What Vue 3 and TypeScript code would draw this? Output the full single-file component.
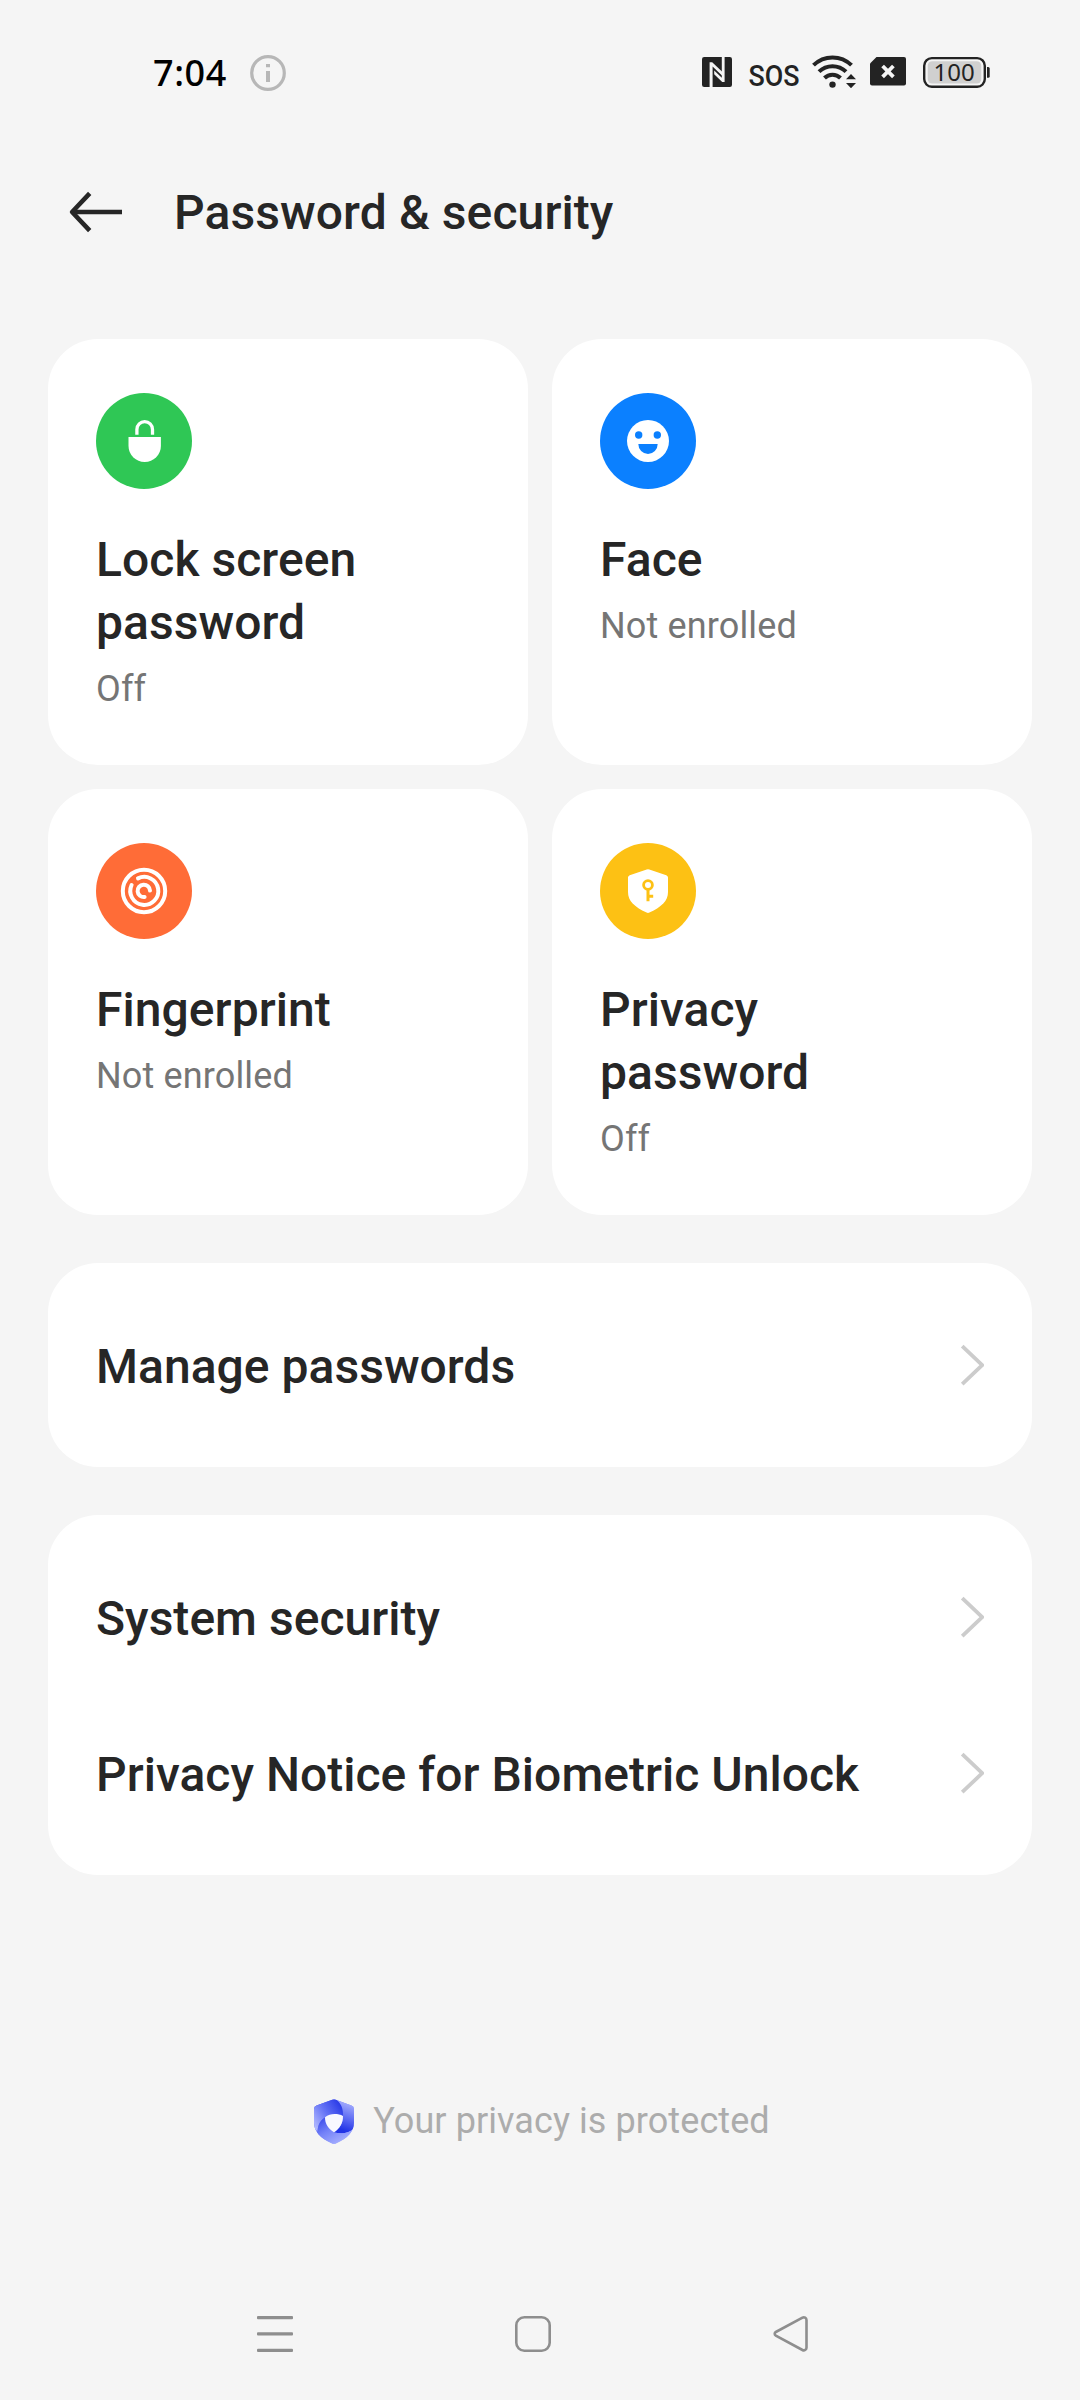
<script setup lang="ts">
interface Tile {
  id: 'lock' | 'face' | 'finger' | 'privacy'
  title: string
  status: string
  color: string
}

const tiles: Tile[] = [
  { id: 'lock', title: 'Lock screen password', status: 'Off', color: '#2fc755' },
  { id: 'face', title: 'Face', status: 'Not enrolled', color: '#0b80ff' },
  { id: 'finger', title: 'Fingerprint', status: 'Not enrolled', color: '#ff6c37' },
  { id: 'privacy', title: 'Privacy password', status: 'Off', color: '#fdc114' },
]

const groups: string[][] = [
  ['Manage passwords'],
  ['System security', 'Privacy Notice for Biometric Unlock'],
]
</script>

<template>
  <div class="screen">
    <div class="status">
      <span class="clock">7:04</span>
      <svg class="info" width="36" height="36" viewBox="0 0 36 36">
        <circle cx="18" cy="18" r="16.3" fill="none" stroke="#b7b7b7" stroke-width="3.2" />
        <path d="M16 9h4v3.3h-4zM16 16h4v11h-4z" fill="#b7b7b7" />
      </svg>
      <div class="indicators">
        <svg class="nfc" width="30" height="34" viewBox="0 0 30 34">
          <rect y="3" width="30" height="30" rx="2.2" fill="#232323" />
          <path d="M7.6 8.200h2.600l10 9.600v4L10.600 12.600V34H7.600z" fill="#f5f5f5" />
          <path d="M19.800 2h2.800v26h-2.400l-8-7.700v-3.800l7.600 7.300z" fill="#f5f5f5" />
        </svg>
        <svg class="sos" width="56" height="46" viewBox="0 0 56 46">
          <text x="2.500" y="31.500" textLength="51" lengthAdjust="spacingAndGlyphs">SOS</text>
        </svg>
        <svg class="wifi" width="45" height="34" viewBox="0 0 45 34" fill="none" stroke="#232323" stroke-width="4">
          <path d="M1.500 11.200a27 27 0 0 1 38 0" />
          <path d="M7 17.700a19.200 19.200 0 0 1 27 0" />
          <path d="M12.500 24a11.400 11.400 0 0 1 16 0" />
          <circle cx="20.500" cy="30.600" r="3.200" fill="#232323" stroke="none" />
          <path d="M34 25.300l5-5.300 5 5.300zM34 28.900l5 5.300 5-5.300z" fill="#232323" stroke="none" />
        </svg>
        <svg class="sim" width="36" height="34" viewBox="0 0 36 34">
          <path d="M6.500 3H34a2 2 0 0 1 2 2v24.600a2 2 0 0 1-2 2H2a2 2 0 0 1-2-2V9.500z" fill="#232323" />
          <path d="M12.600 12l10.800 10.800M23.400 12L12.600 22.800" stroke="#f5f5f5" stroke-width="3.800" />
        </svg>
        <svg class="battery" width="67" height="34" viewBox="0 0 67 34">
          <rect x="1.200" y="4.100" width="60.600" height="28.600" rx="7.600" fill="none" stroke="#232323" stroke-width="2.400" />
          <rect x="4.700" y="7.300" width="53.600" height="22.300" rx="4.500" fill="#d0d0d0" />
          <path d="M64 13h1.200a1.500 1.500 0 0 1 1.500 1.500v7.800a1.500 1.500 0 0 1-1.500 1.500H64z" fill="#232323" />
          <text x="10.600" y="27">100</text>
        </svg>
      </div>
    </div>

    <header class="bar">
      <svg class="back" width="54" height="46" viewBox="0 0 54 46" fill="none" stroke="#262626" stroke-width="4.600">
        <path d="M21.700 4.300L4.100 23l17.600 18.700" stroke-linejoin="round" />
        <path d="M4.500 23H54" />
      </svg>
      <h1>Password &amp; security</h1>
    </header>

    <main>
      <section class="tiles">
        <article v-for="tile in tiles" :key="tile.id" class="tile">
          <svg class="badge" width="96" height="96" viewBox="0 0 96 96">
            <circle cx="48" cy="48" r="48" :fill="tile.color" />
            <template v-if="tile.id === 'lock'">
              <path d="M40.900 41.700V36.400a7.800 7.800 0 0 1 15.600 0v5.300" fill="none" stroke="#fff" stroke-width="3.300" />
              <path d="M32.500 44h32.400v8.800a16.200 16.200 0 0 1-32.400 0z" fill="#fff" />
            </template>
            <template v-else-if="tile.id === 'face'">
              <circle cx="48" cy="48" r="21" fill="#fff" />
              <g :fill="tile.color">
                <circle cx="38.700" cy="42" r="3.700" />
                <circle cx="57.300" cy="42" r="3.700" />
                <path d="M38.300 51h19.400a9.700 10 0 0 1-19.400 0z" />
              </g>
            </template>
            <template v-else-if="tile.id === 'finger'">
              <g fill="none" stroke="#fff" stroke-width="4" stroke-linecap="round">
                <circle cx="48" cy="48" r="21.200" />
                <path d="M42 35.400A14 14 0 1 1 35.600 42" />
                <path d="M48.600 54A6.200 6.200 0 1 1 54 47.600" />
              </g>
            </template>
            <template v-else>
              <path d="M46.700 26.400a4 4 0 0 1 2.600 0L66.300 32.200a2.600 2.600 0 0 1 1.700 2.400V49c0 9-6.300 14.700-18.600 20.600a3.400 3.400 0 0 1-2.800 0C34.300 63.700 28 58 28 49V34.600a2.600 2.600 0 0 1 1.700-2.400z" fill="#fff" />
              <g fill="none" :stroke="tile.color">
                <circle cx="48" cy="42" r="4.400" stroke-width="2.800" />
                <path d="M48 46v12.300M48 53.300h5.200" stroke-width="3" />
              </g>
            </template>
          </svg>
          <h2>{{ tile.title }}</h2>
          <p>{{ tile.status }}</p>
        </article>
      </section>

      <section v-for="(group, index) in groups" :key="index" class="group">
        <div v-for="label in group" :key="label" class="row">
          <span>{{ label }}</span>
          <svg width="24" height="42" viewBox="0 0 24 42" fill="none" stroke="#cccccc" stroke-width="3.800">
            <path d="M2.200 2.200L22.200 21.200l-20 19" stroke-linejoin="round" />
          </svg>
        </div>
      </section>
    </main>

    <footer class="privacy">
      <svg width="40" height="45" viewBox="0 0 40 45">
        <defs>
          <linearGradient id="foldLeft" x1="0" y1="0.9" x2="1" y2="0.2">
            <stop offset="0" stop-color="#b6bdff" />
            <stop offset="0.5" stop-color="#6472f5" />
            <stop offset="1" stop-color="#2536e6" />
          </linearGradient>
          <linearGradient id="foldRight" x1="0.6" y1="0" x2="0.4" y2="1">
            <stop offset="0" stop-color="#b0b8ff" />
            <stop offset="0.55" stop-color="#5b69f2" />
            <stop offset="0.9" stop-color="#2234e6" />
          </linearGradient>
          <linearGradient id="foldBottom" x1="0" y1="0" x2="0.8" y2="0.9">
            <stop offset="0" stop-color="#2b3ce8" />
            <stop offset="0.5" stop-color="#7482f8" />
            <stop offset="1" stop-color="#a9b2ff" />
          </linearGradient>
          <clipPath id="shieldEdge">
            <path d="M18.200.8a5 5 0 0 1 3.600 0L37.500 6.500A3.800 3.800 0 0 1 40 10v13.500c0 9.500-6.500 15.500-17.700 20.800a5.500 5.500 0 0 1-4.600 0C6.500 39 0 33 0 23.500V10a3.800 3.800 0 0 1 2.500-3.500z" />
          </clipPath>
        </defs>
        <g clip-path="url(#shieldEdge)">
          <path d="M0 0h40v45H0z" fill="url(#foldBottom)" />
          <path d="M20 0h20v29c-4.500 5.500-12 6-20 4.500 5.500-4 9-9.500 9-16z" fill="url(#foldRight)" />
          <path d="M0 0h21c6 3 8.500 10 8 17.500-6-3.500-13.500-3-18 1C6.500 21 4 25.500 3.500 32L0 30z" fill="url(#foldLeft)" />
          <path d="M3.500 32c.5-6.500 3-11 7.500-13.500 0 6 3 11.500 9 15 8 1.500 15.500 1 20-4.500V45H0z" fill="url(#foldBottom)" />
          <path d="M11 18.300c5-4 12.500-4 18-1.300 0 7-3 12.300-9 16.300-6-3.500-9-9-9-15z" fill="#f8f8ff" />
        </g>
      </svg>
      <span>Your privacy is protected</span>
    </footer>

    <nav class="keys">
      <svg width="36" height="36" viewBox="0 0 36 36" fill="#8e8e8e">
        <rect width="36" height="3.300" rx="1" />
        <rect y="16.300" width="36" height="3.300" rx="1" />
        <rect y="32.700" width="36" height="3.300" rx="1" />
      </svg>
      <svg width="36" height="36" viewBox="0 0 36 36">
        <rect x="1.300" y="1.300" width="33.400" height="33.400" rx="8" fill="none" stroke="#8e8e8e" stroke-width="2.600" />
      </svg>
      <svg width="36" height="36" viewBox="0 0 36 36">
        <path d="M2.800 16L29.500 1.700a2.700 2.700 0 0 1 4 2.300v27.700a2.700 2.700 0 0 1-4 2.300L2.800 19.700a2.100 2.100 0 0 1 0-3.700z" fill="none" stroke="#8e8e8e" stroke-width="2.600" />
      </svg>
    </nav>
  </div>
</template>

<style>
body {
  background: #f5f5f5;
}
</style>

<style scoped>
.screen {
  box-sizing: border-box;
  display: flex;
  flex-direction: column;
  width: 1080px;
  height: 2400px;
  background: #f5f5f5;
  color: #262626;
  font-family: Roboto, sans-serif;
}
svg {
  display: block;
  flex: none;
}
h1, h2, p {
  margin: 0;
}
.status {
  display: flex;
  align-items: center;
  height: 144px;
  padding: 0 90px 0 153px;
}
.clock {
  width: 97px;
  padding-top: 1px;
  font: 500 36px/50px "Noto Sans", sans-serif;
  letter-spacing: 0.6px;
  color: #000;
}
.info {
  margin-top: 1px;
}
.indicators {
  display: flex;
  align-items: flex-start;
  margin-left: auto;
  margin-top: -2px;
}
.sos {
  margin: 0 0 -12px 14px;
}
.sos text {
  font: 500 29.500px Roboto, sans-serif;
  fill: #232323;
}
.wifi {
  margin-left: 10px;
}
.sim {
  margin-left: 13px;
}
.battery {
  margin-left: 17px;
}
.battery text {
  font: 400 24px "Noto Sans", sans-serif;
  fill: #232323;
}
.bar {
  display: flex;
  align-items: center;
  height: 136px;
  padding-left: 68px;
}
.bar h1 {
  margin-left: 52px;
  padding-top: 2px;
  font-size: 48px;
  font-weight: 500;
  line-height: 64px;
  letter-spacing: 0.1px;
}
main {
  display: flex;
  flex-direction: column;
  gap: 48px;
  padding: 59px 48px 0;
}
.tiles {
  display: grid;
  grid-template-columns: 480px 480px;
  grid-auto-rows: 426px;
  gap: 24px;
}
.tile {
  box-sizing: border-box;
  padding: 54px 120px 0 48px;
  border-radius: 50px;
  background: #fff;
}
.tile h2 {
  margin-top: 39px;
  font-size: 48px;
  font-weight: 500;
  line-height: 63px;
  letter-spacing: 0.06px;
}
.tile p {
  margin-top: 11px;
  font-size: 36px;
  line-height: 48px;
  letter-spacing: 0.15px;
  color: #757575;
}
.group {
  padding: 24px 48px;
  border-radius: 50px;
  background: #fff;
}
.row {
  display: flex;
  align-items: center;
  justify-content: space-between;
  height: 156px;
  font-size: 48px;
  font-weight: 500;
  letter-spacing: 0.03px;
}
.row span {
  padding-top: 2px;
}
.privacy {
  display: flex;
  align-items: center;
  justify-content: center;
  gap: 19px;
  margin-top: 221px;
  padding-left: 4px;
  height: 50px;
  font-size: 36px;
  letter-spacing: 0.08px;
  color: #acacac;
}
.keys {
  display: flex;
  justify-content: space-between;
  margin-top: auto;
  padding: 0 271px 48px 257px;
}
</style>
